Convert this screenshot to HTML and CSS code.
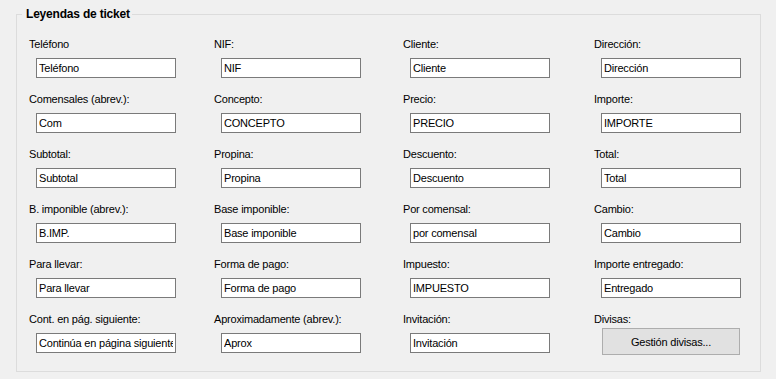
FILE: index.html
```html
<!DOCTYPE html>
<html lang="es">
<head>
    <meta charset="UTF-8">
    <title>Leyendas de ticket</title>
    <link rel="stylesheet" href="styles.css">
</head>
<body>

<fieldset class="group">
    <legend class="group-title">Leyendas de ticket</legend>

    <div class="fields">
        <!-- Fila 1 -->
        <div class="field"><label>Teléfono</label><input type="text" value="Teléfono"></div>
        <div class="field"><label>NIF:</label><input type="text" value="NIF"></div>
        <div class="field"><label>Cliente:</label><input type="text" value="Cliente"></div>
        <div class="field"><label>Dirección:</label><input type="text" value="Dirección"></div>
        <!-- Fila 2 -->
        <div class="field"><label>Comensales (abrev.):</label><input type="text" value="Com"></div>
        <div class="field"><label>Concepto:</label><input type="text" value="CONCEPTO"></div>
        <div class="field"><label>Precio:</label><input type="text" value="PRECIO"></div>
        <div class="field"><label>Importe:</label><input type="text" value="IMPORTE"></div>
        <!-- Fila 3 -->
        <div class="field"><label>Subtotal:</label><input type="text" value="Subtotal"></div>
        <div class="field"><label>Propina:</label><input type="text" value="Propina"></div>
        <div class="field"><label>Descuento:</label><input type="text" value="Descuento"></div>
        <div class="field"><label>Total:</label><input type="text" value="Total"></div>
        <!-- Fila 4 -->
        <div class="field"><label>B. imponible (abrev.):</label><input type="text" value="B.IMP."></div>
        <div class="field"><label>Base imponible:</label><input type="text" value="Base imponible"></div>
        <div class="field"><label>Por comensal:</label><input type="text" value="por comensal"></div>
        <div class="field"><label>Cambio:</label><input type="text" value="Cambio"></div>
        <!-- Fila 5 -->
        <div class="field"><label>Para llevar:</label><input type="text" value="Para llevar"></div>
        <div class="field"><label>Forma de pago:</label><input type="text" value="Forma de pago"></div>
        <div class="field"><label>Impuesto:</label><input type="text" value="IMPUESTO"></div>
        <div class="field"><label>Importe entregado:</label><input type="text" value="Entregado"></div>
        <!-- Fila 6 -->
        <div class="field"><label>Cont. en pág. siguiente:</label><input type="text" value="Continúa en página siguiente"></div>
        <div class="field"><label>Aproximadamente (abrev.):</label><input type="text" value="Aprox"></div>
        <div class="field"><label>Invitación:</label><input type="text" value="Invitación"></div>
        <div class="field"><label>Divisas:</label><button class="btn">Gestión divisas...</button></div>
    </div>
</fieldset>

</body>
</html>
```

FILE: styles.css
```css
body {
    margin: 0;
    background-color: #f0f0f0;
    font-family: 'Liberation Sans', Arial, sans-serif;
    font-size: 11px;
    letter-spacing: -0.2px;
    color: #000;
}

.group {
    box-sizing: border-box;
    width: 745px;
    min-width: 0;
    margin: 7px 0 0 16px;
    padding: 0 0 4px 0;
    border: 1px solid #dcdcdc;
}

.group-title {
    margin-left: 5px;
    padding: 0 2px 0 4px;
    font-size: 12px;
    font-weight: bold;
    line-height: 14px;
}

.fields {
    display: grid;
    grid-template-columns: 185px 189px 191px 150px;
    grid-auto-rows: 55px;
    padding: 16px 0 0 12px;
}

.field {
    display: flex;
    flex-direction: column;
    align-items: flex-start;
}

.field label {
    line-height: 13px;
    margin: 1px 0 7px 0;
}

.field input {
    box-sizing: border-box;
    width: 140px;
    height: 20px;
    margin: 0 0 0 7px;
    padding: 0 2px;
    border: 1px solid #7a7a7a;
    background-color: #fff;
    font-family: inherit;
    font-size: 11px;
    letter-spacing: inherit;
    color: #000;
    outline: none;
}

.btn {
    box-sizing: border-box;
    width: 138px;
    height: 27px;
    margin: -5px 0 0 8px;
    border: 1px solid #adadad;
    background-color: #e1e1e1;
    font-family: inherit;
    font-size: 11px;
    letter-spacing: inherit;
    color: #000;
}
```
